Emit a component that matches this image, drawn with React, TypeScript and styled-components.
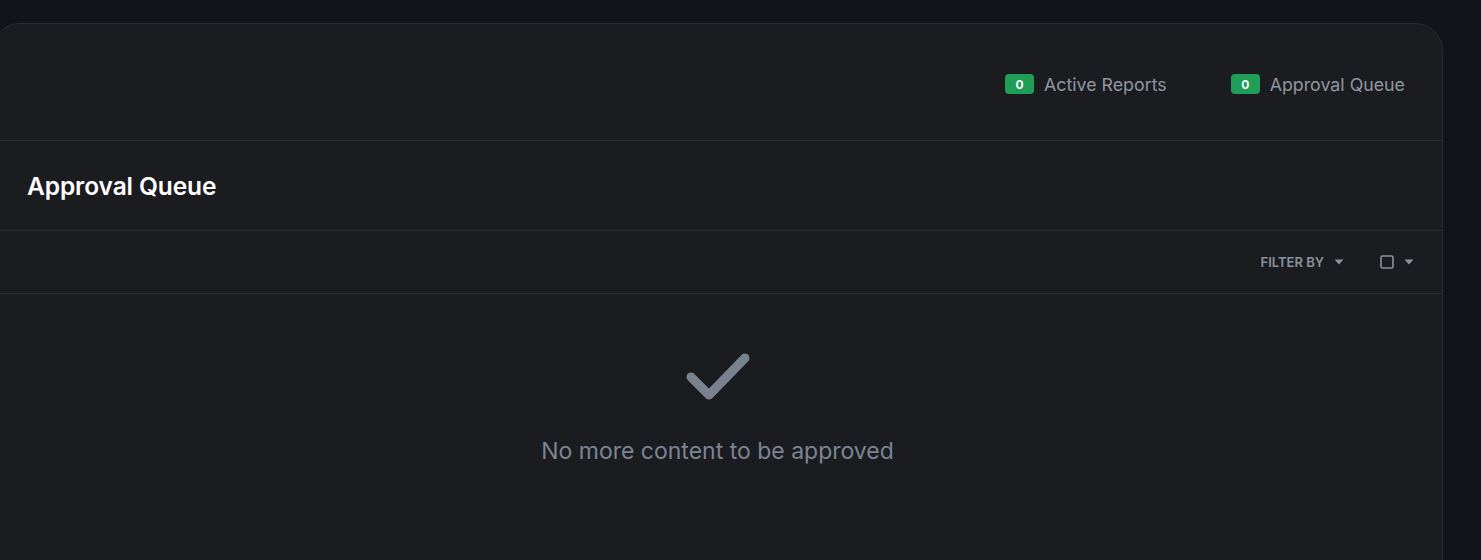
import React from "react";
import styled, { createGlobalStyle } from "styled-components";

const Global = createGlobalStyle`
  html, body { margin: 0; padding: 0; background: #111419; }
  body { font-family: Inter, "Noto Sans", sans-serif; overflow: hidden; }
  * { box-sizing: border-box; }
`;

const Page = styled.div`
  padding-top: 23px;
  height: 560px;
  overflow: hidden;
`;

const Card = styled.div`
  margin-left: -8px;
  width: 1451px;
  min-height: 700px;
  background: #1b1c20;
  border: 1px solid #2b2c30;
  border-radius: 28px;
`;

const Header = styled.div`
  height: 117px;
  display: flex;
  align-items: center;
  justify-content: flex-end;
  gap: 64px;
  padding: 4px 37px 0 0;
  border-bottom: 1px solid #2a2d33;
`;

const Stat = styled.div`
  display: flex;
  align-items: center;
  gap: 10px;
`;

const Badge = styled.span`
  display: inline-flex;
  align-items: center;
  justify-content: center;
  width: 29px;
  height: 20px;
  border-radius: 4px;
  background: #1f9e57;
  color: #ffffff;
  font-size: 12px;
  font-weight: 700;
`;

const StatLabel = styled.span`
  color: #9097a1;
  font-size: 17.8px;
  font-weight: 400;
`;

const TitleBar = styled.div`
  height: 90px;
  display: flex;
  align-items: center;
  padding-left: 34px;
  border-bottom: 1px solid #2a2d33;
`;

const Title = styled.h1`
  margin: 0;
  color: #ffffff;
  font-size: 24.5px;
  font-weight: 600;
  letter-spacing: -0.1px;
`;

const Toolbar = styled.div`
  height: 63px;
  display: flex;
  align-items: center;
  justify-content: flex-end;
  gap: 36px;
  padding-right: 28px;
  border-bottom: 1px solid #2a2d33;
`;

const ToolButton = styled.button`
  display: flex;
  align-items: center;
  gap: 10px;
  background: none;
  border: none;
  padding: 0;
  color: #8c929c;
  font-family: inherit;
  font-size: 13px;
  font-weight: 600;
  text-transform: uppercase;
  cursor: pointer;
`;

const Empty = styled.div`
  display: flex;
  flex-direction: column;
  align-items: center;
  padding-top: 58px;
  gap: 37px;
`;

const EmptyText = styled.div`
  color: #7b8594;
  font-size: 23px;
  line-height: 28px;
  font-weight: 400;
`;

const Caret = () => (
  <svg width="10" height="6" viewBox="0 0 10 6">
    <path d="M0.5 0.5 H9.5 L5 5.5 Z" fill="#8c929c" />
  </svg>
);

export default function App() {
  return (
    <>
      <Global />
      <Page>
        <Card>
          <Header>
            <Stat>
              <Badge>0</Badge>
              <StatLabel>Active Reports</StatLabel>
            </Stat>
            <Stat>
              <Badge>0</Badge>
              <StatLabel>Approval Queue</StatLabel>
            </Stat>
          </Header>
          <TitleBar>
            <Title>Approval Queue</Title>
          </TitleBar>
          <Toolbar>
            <ToolButton>
              Filter By <Caret />
            </ToolButton>
            <ToolButton aria-label="select">
              <svg width="14" height="14" viewBox="0 0 14 14">
                <rect x="1" y="1" width="12" height="12" rx="1.5" fill="none" stroke="#8c929c" strokeWidth="1.6" />
              </svg>
              <Caret />
            </ToolButton>
          </Toolbar>
          <Empty>
            <svg width="66" height="48" viewBox="0 0 66 48">
              <path d="M6 25 L24 43 L60 6" fill="none" stroke="#7a8290" strokeWidth="9" strokeLinecap="round" strokeLinejoin="round" />
            </svg>
            <EmptyText>No more content to be approved</EmptyText>
          </Empty>
        </Card>
      </Page>
    </>
  );
}
